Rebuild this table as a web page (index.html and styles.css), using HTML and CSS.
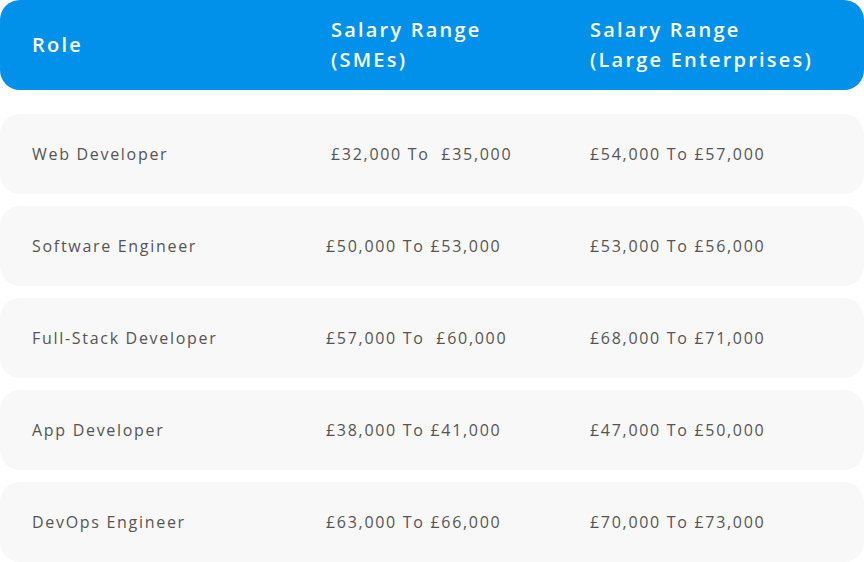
FILE: index.html
```html
<!DOCTYPE html>
<html lang="en">
<head>
<meta charset="utf-8">
<title>Salary Ranges</title>
<link rel="stylesheet" href="styles.css">
</head>
<body>
<div class="table">
  <div class="row head">
    <div class="cell">Role</div>
    <div class="cell shift">Salary Range<br>(SMEs)</div>
    <div class="cell">Salary Range<br>(Large Enterprises)</div>
  </div>
  <div class="row">
    <div class="cell">Web Developer</div>
    <div class="cell shift">£32,000 To&nbsp; £35,000</div>
    <div class="cell">£54,000 To £57,000</div>
  </div>
  <div class="row">
    <div class="cell">Software Engineer</div>
    <div class="cell">£50,000 To £53,000</div>
    <div class="cell">£53,000 To £56,000</div>
  </div>
  <div class="row">
    <div class="cell">Full-Stack Developer</div>
    <div class="cell">£57,000 To&nbsp; £60,000</div>
    <div class="cell">£68,000 To £71,000</div>
  </div>
  <div class="row">
    <div class="cell">App Developer</div>
    <div class="cell">£38,000 To £41,000</div>
    <div class="cell">£47,000 To £50,000</div>
  </div>
  <div class="row">
    <div class="cell">DevOps Engineer</div>
    <div class="cell">£63,000 To £66,000</div>
    <div class="cell">£70,000 To £73,000</div>
  </div>
</div>
</body>
</html>
```
FILE: styles.css
```css
* { box-sizing: border-box; }
body {
  margin: 0;
  background: #ffffff;
  font-family: "Open Sans", "DejaVu Sans", sans-serif;
}
.table {
  width: 864px;
  display: flex;
  flex-direction: column;
  gap: 12px;
}
.row {
  display: grid;
  grid-template-columns: 294px 264px 1fr;
  align-items: center;
  height: 80px;
  padding-left: 32px;
  border-radius: 20px;
  background: #f8f8f8;
  color: #555555;
  font-size: 16px;
  letter-spacing: 1.7px;
  white-space: nowrap;
}
.row.head {
  height: 90px;
  margin-bottom: 12px;
  background: #0191ea;
  color: #ffffff;
  font-size: 20px;
  font-weight: 600;
  letter-spacing: 2.2px;
  line-height: 30px;
}
.shift { padding-left: 5px; }
```
